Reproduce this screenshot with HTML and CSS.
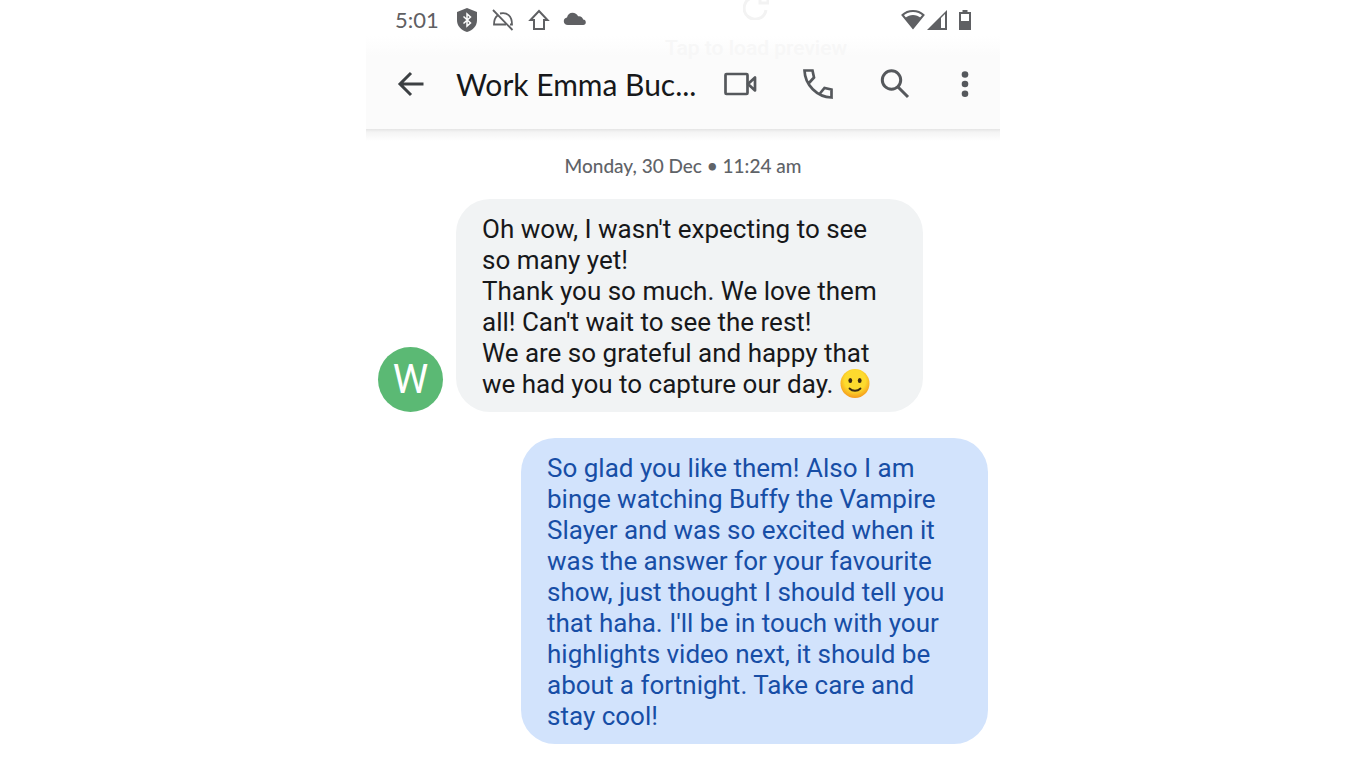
FILE: index.html
```html
<!DOCTYPE html>
<html lang="en">
<head>
    <meta charset="UTF-8">
    <meta name="viewport" content="width=device-width, initial-scale=1.0">
    <title>Messages</title>
    <link rel="stylesheet" href="styles.css">
</head>
<body>
    <div class="phone">
        <header class="header">
            <!-- Status bar -->
            <div class="status-bar">
                <span class="clock">5:01</span>
                <div class="status-icons">
                    <svg viewBox="0 0 24 24" width="24" height="24">
                        <path fill="#5f6063" d="M12 0l10 4v8c0 6-4 10-10 12C6 22 2 18 2 12V4z"/>
                        <path fill="none" stroke="#fff" stroke-width="1.5" d="M8.5 8.5l7 6.5-3.5 3V6l3.5 3-7 6.5"/>
                    </svg>
                    <svg viewBox="0 0 24 24" width="24" height="24" fill="none" stroke="#5f6063" stroke-width="1.8">
                        <path d="M2 2l19.500 20M6.500 7.500C4 9.500 3 12 3 16.500h12M9 5.500c7-1.500 12 2 12 11h-2"/>
                    </svg>
                    <svg viewBox="0 0 24 24" width="24" height="24" fill="none" stroke="#5f6063" stroke-width="2">
                        <path d="M12 3l8.500 9H17v9H7v-9H3.500z"/>
                    </svg>
                    <svg viewBox="0 0 24 24" width="24" height="24">
                        <path fill="#5f6063" d="M5 17C2.500 17 .8 15.500.8 13.300.8 11.300 2 10 4 9.600 4.600 6.500 6.800 4.700 9.500 4.700c2.500 0 4.500 1.300 5.600 3.600 2.800-.4 4.600 1 5 3.300 1.800.2 2.700 1.200 2.700 2.700 0 1.700-1 2.700-2.600 2.700z"/>
                    </svg>
                </div>
                <div class="signal-icons">
                    <svg viewBox="0 0 24 24" width="24" height="24" fill="#5f6063">
                        <path fill="none" stroke="#5f6063" stroke-width="2" d="M1.500 7C7 1.500 17 1.500 22.500 7L12 20z"/>
                        <path d="M4 10c5-4 11-4 16 0l-8 10.500z"/>
                    </svg>
                    <svg viewBox="0 0 24 24" width="24" height="24">
                        <path fill="#5f6063" d="M0 22L20 2v20H0zM14 10v10h4V6z" fill-rule="evenodd"/>
                    </svg>
                    <svg viewBox="0 0 24 24" width="24" height="24">
                        <path fill="#5f6063" fill-rule="evenodd" d="M9.500 2h5v2H18v18H6V4h3.500zM8 6v7h8V6z"/>
                    </svg>
                </div>
            </div>

            <!-- Conversation bar -->
            <div class="app-bar">
                <button class="icon-button back" aria-label="Back">
                    <svg viewBox="0 0 28 28" width="28" height="28" fill="none" stroke="#3c4043" stroke-width="3">
                        <path d="M14 3L3 14l11 11M3 14h23.500"/>
                    </svg>
                </button>
                <h1 class="title">Work Emma Buc...</h1>
                <div class="actions">
                    <button class="icon-button" aria-label="Video call">
                        <svg viewBox="0 0 34 34" width="34" height="34" fill="none" stroke="#55585c" stroke-width="2.700" stroke-linejoin="round">
                            <rect x="2.500" y="7" width="22" height="20" rx="1"/>
                            <path d="M25 17l7-6.500v13z"/>
                        </svg>
                    </button>
                    <button class="icon-button" aria-label="Call">
                        <svg viewBox="0 0 34 34" width="34" height="34" fill="none" stroke="#55585c" stroke-width="2.700">
                            <path d="M8 16l5-5.500-1.500-7h-8C4 18 16 30 30.500 30.500v-8l-7-1.500-5 6"/>
                        </svg>
                    </button>
                    <button class="icon-button" aria-label="Search">
                        <svg viewBox="0 0 34 34" width="34" height="34" fill="none" stroke="#55585c" stroke-width="3">
                            <circle cx="12.500" cy="13" r="9.200"/>
                            <path d="M19 20l10 10"/>
                        </svg>
                    </button>
                    <button class="icon-button" aria-label="More options">
                        <svg viewBox="0 0 16 34" width="16" height="34" fill="#55585c">
                            <circle cx="8" cy="7.500" r="3.300"/>
                            <circle cx="8" cy="17" r="3.300"/>
                            <circle cx="8" cy="26.800" r="3.300"/>
                        </svg>
                    </button>
                </div>
            </div>

            <!-- Faded preview loader behind the header -->
            <div class="preview">
                <svg viewBox="0 0 26 26" width="26" height="26" fill="none" stroke="#f3f3f3" stroke-width="3">
                    <path d="M8 4a11 11 0 1 0 15 12M17 0v9h8V3"/>
                </svg>
                <span>Tap to load preview</span>
            </div>
        </header>

        <main class="conversation">
            <p class="date">Monday, 30 Dec • 11:24 am</p>

            <div class="message received">
                <div class="avatar">W</div>
                <p class="bubble">
                    Oh wow, I wasn't expecting to see so many yet!<br>
                    Thank you so much. We love them all! Can't wait to see the rest!<br>
                    We are so grateful and happy that we had you to capture our day.
                    <svg class="emoji" viewBox="0 0 30 30" width="30" height="30" role="img" aria-label="Slightly smiling face">
                        <defs>
                            <radialGradient id="face" cx="50%" cy="40%" r="60%">
                                <stop offset="0.6" stop-color="#fddb2e"/>
                                <stop offset="1" stop-color="#f59a1b"/>
                            </radialGradient>
                        </defs>
                        <circle cx="15" cy="14.500" r="14.500" fill="url(#face)"/>
                        <ellipse cx="10.300" cy="11.500" rx="1.900" ry="2.500" fill="#3b2a12"/>
                        <ellipse cx="19.700" cy="11.500" rx="1.900" ry="2.500" fill="#3b2a12"/>
                        <path d="M9.500 19.500c3 3 8 3 11 0" fill="none" stroke="#3b2a12" stroke-width="1.800" stroke-linecap="round"/>
                    </svg>
                </p>
            </div>

            <div class="message sent">
                <p class="bubble">So glad you like them! Also I am binge watching Buffy the Vampire Slayer and was so excited when it was the answer for your favourite show, just thought I should tell you that haha. I'll be in touch with your highlights video next, it should be about a fortnight. Take care and stay cool!</p>
            </div>
        </main>
    </div>
</body>
</html>
```

FILE: styles.css
```css
* {
    box-sizing: border-box;
    margin: 0;
    padding: 0;
}

body {
    font-family: Roboto, Arial, sans-serif;
    background-color: #ffffff;
}

svg {
    display: block;
}

.phone {
    max-width: 634px;
    margin: 0 auto;
}

.header {
    position: relative;
    background: linear-gradient(#ffffff 36px, #fbfbfb 56px);
}

/* soft shadow below the header only */
.header::after {
    content: "";
    position: absolute;
    top: 100%;
    left: 0;
    width: 100%;
    height: 12px;
    background: linear-gradient(#e4e4e4, #f4f4f4 3px, #ffffff);
}

.status-bar {
    display: flex;
    align-items: center;
    height: 40px;
    padding: 0 23px 0 29px;
}

.clock {
    font-family: Lato, sans-serif;
    font-size: 22px;
    line-height: 24px;
    color: #5f6063;
}

.status-icons {
    display: flex;
    gap: 12px;
    margin-left: 16px;
}

.signal-icons {
    display: flex;
    gap: 2px;
    margin-left: auto;
}

.app-bar {
    display: flex;
    align-items: center;
    height: 89px;
    padding: 0 27px 1px 31px;
}

.icon-button {
    flex-shrink: 0;
    border: none;
    background: none;
    cursor: pointer;
}

.title {
    flex: 1;
    margin-left: 31px;
    font-family: Lato, sans-serif;
    font-size: 30px;
    font-weight: 400;
    line-height: 34px;
    color: #17181a;
    white-space: nowrap;
}

.actions {
    display: flex;
    gap: 44px;
}

.preview {
    position: absolute;
    top: -6px;
    left: 299px;
    display: flex;
    flex-direction: column;
    align-items: center;
    gap: 16px;
    font-size: 21px;
    font-weight: 500;
    color: #f7f7f7;
    pointer-events: none;
}

.conversation {
    padding: 24px 12px;
}

.date {
    margin-bottom: 20px;
    font-family: Lato, sans-serif;
    font-size: 19px;
    font-weight: 500;
    line-height: 26px;
    text-align: center;
    color: #5f6368;
}

.message {
    display: flex;
    align-items: flex-end;
    margin-bottom: 26px;
}

.avatar {
    display: flex;
    align-items: center;
    justify-content: center;
    flex-shrink: 0;
    width: 65px;
    height: 65px;
    margin-right: 13px;
    border-radius: 50%;
    background-color: #5bb974;
    font-size: 40px;
    color: #ffffff;
}

.bubble {
    max-width: 467px;
    padding: 15px 26px 12px;
    border-radius: 34px;
    font-size: 26px;
    line-height: 31px;
}

.received .bubble {
    background-color: #f1f3f4;
    color: #17181a;
}

.sent {
    justify-content: flex-end;
}

.sent .bubble {
    background-color: #d2e3fc;
    color: #174ea6;
}

.emoji {
    display: inline-block;
    vertical-align: top;
}
```
